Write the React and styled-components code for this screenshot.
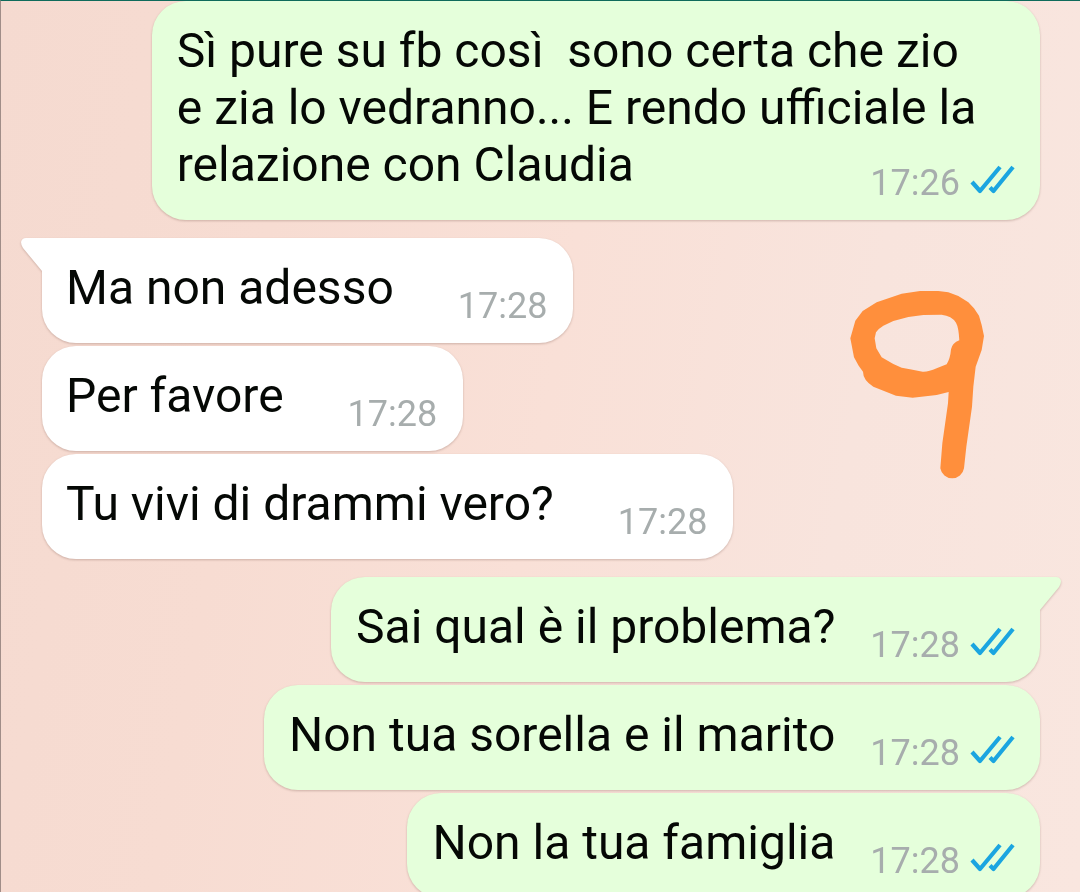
import styled, { createGlobalStyle, css } from 'styled-components'

const colors = {
    outgoing: '#e5ffdb',
    incoming: '#ffffff',
    text: '#050805',
    time: '#a7adad',
    tick: '#1ba5e0',
    marker: '#ff8f3c',
}

const GlobalStyle = createGlobalStyle`
    * {
        box-sizing: border-box;
    }

    body {
        margin: 0;
        font-family: Roboto, sans-serif;
        color: ${colors.text};
    }
`

const StyledChat = styled.main`
    position: relative;
    height: 100vh;
    overflow: hidden;
    border-top: 1px solid #0f6b5b;
    border-left: 1px solid #a08d88;
    background: linear-gradient(100deg, #f5dad0 0%, #f7dcd2 25%, #f9e0d7 50%, #f8e4dd 75%, #f9e6df 100%);
`

const StyledThread = styled.ol`
    display: flex;
    flex-direction: column;
    gap: 18px;
    margin: 0;
    padding: 0 40px 0 41px;
    list-style: none;
`

const StyledGroup = styled.li`
    display: flex;
    flex-direction: column;
    align-items: ${props => (props.$outgoing ? 'flex-end' : 'flex-start')};
    gap: 3px;
`

const StyledBubble = styled.article`
    position: relative;
    display: flex;
    align-items: flex-end;
    gap: ${props => (props.$outgoing ? '35px' : '64px')};
    max-width: 89%;
    padding: ${props => (props.$outgoing ? '0 25px' : '0 26px 0 24px')};
    border-radius: 34px;
    background-color: ${props => (props.$outgoing ? colors.outgoing : colors.incoming)};
    filter: drop-shadow(0 1px 1px rgba(110, 70, 60, 0.3));

    ${props => props.$tail && (props.$outgoing
        ? css`border-top-right-radius: 0;`
        : css`border-top-left-radius: 0;`)}

    /* long messages run on above the time, which floats beside the last line */
    ${props => props.$long && css`
        display: block;
    `}
`

const StyledText = styled.p`
    margin: 0;
    padding: 21px 0 27px;
    padding-right: ${props => (props.$long ? '32px' : '0')};
    font-size: 48px;
    line-height: 57px;
    white-space: pre-wrap;
`

const StyledMeta = styled.div`
    display: flex;
    align-items: center;
    gap: 10px;
    padding-bottom: 16px;
    color: ${colors.time};
    font-size: 36px;
    line-height: 42px;

    ${props => props.$long && css`
        float: right;
        margin-top: -58px;
    `}
`

const StyledTail = styled.svg`
    position: absolute;
    top: 0;
    width: 23px;
    height: 36px;
    fill: ${props => (props.$outgoing ? colors.outgoing : colors.incoming)};

    ${props => (props.$outgoing
        ? css`left: calc(100% - 1px);`
        : css`
            right: calc(100% - 1px);
            transform: scaleX(-1);
        `)}
`

const StyledTicks = styled.svg`
    width: 45px;
    height: 30px;
    margin-bottom: 6px;
    fill: none;
    stroke: ${colors.tick};
    stroke-width: 4.2;
    stroke-linejoin: round;
`

const StyledMarker = styled.svg`
    position: absolute;
    top: 269px;
    right: 70px;
    width: 180px;
    height: 230px;
    fill: ${colors.marker};
`

const groups = [
    {
        outgoing: true,
        messages: [
            {
                text: 'Sì pure su fb così  sono certa che zio e zia lo vedranno... E rendo ufficiale la relazione con Claudia',
                time: '17:26',
                long: true,
            },
        ],
    },
    {
        tail: true,
        messages: [
            { text: 'Ma non adesso', time: '17:28' },
            { text: 'Per favore', time: '17:28' },
            { text: 'Tu vivi di drammi vero?', time: '17:28' },
        ],
    },
    {
        outgoing: true,
        tail: true,
        messages: [
            { text: 'Sai qual è il problema?', time: '17:28' },
            { text: 'Non tua sorella e il marito', time: '17:28' },
            { text: 'Non la tua famiglia', time: '17:28' },
        ],
    },
]

const Ticks = () => (
    <StyledTicks viewBox="0 0 45 30" role="img" aria-label="Letto">
        <path d="M2 17 10 26 30 2" />
        <path d="M20 22.5 23.5 26 43 2" />
    </StyledTicks>
)

const Message = ({ text, time, long, outgoing, tail }) => (
    <StyledBubble $outgoing={outgoing} $tail={tail} $long={long}>
        {tail && (
            <StyledTail $outgoing={outgoing} viewBox="0 0 23 36" aria-hidden="true">
                <path d="M0 0H17Q21 0 22 4Q22 7 20 10L1 33V36H0Z" />
            </StyledTail>
        )}
        <StyledText $long={long}>{text}</StyledText>
        <StyledMeta $long={long}>
            <time>{time}</time>
            {outgoing && <Ticks />}
        </StyledMeta>
    </StyledBubble>
)

const Marker = () => (
    <StyledMarker viewBox="0 0 540 690" role="img" aria-label="9">
        <path
            fillRule="evenodd"
            d="M270 63 325 63 355 67 385 78 415 97 432 115 447 137 455 165 462 198 455 240 437 290 430 350 426 410
               409 530 402 595A36 36 0 0 1 331 595L337 520 354 400 356 366 320 375 248 383 198 377 130 350
               Q99 330 99 305L86 287 72 262 61 205 76 152 98 123 140 97 215 71Z
               M280 135 335 134Q365 137 378 158Q386 172 388 211Q367 219 363 238Q361 265 350 283L320 295
               Q295 306 278 305L240 298 215 293 190 282 155 262 139 235 134 205 138 187Q146 175 160 167L190 153 235 141Z"
        />
    </StyledMarker>
)

const App = () => (
    <>
        <GlobalStyle />
        <StyledChat>
            <StyledThread>
                {groups.map(({ outgoing, tail, messages }, groupIndex) => (
                    <StyledGroup key={groupIndex} $outgoing={outgoing}>
                        {messages.map((message, index) => (
                            <Message
                                key={message.text}
                                {...message}
                                outgoing={outgoing}
                                tail={tail && index === 0}
                            />
                        ))}
                    </StyledGroup>
                ))}
            </StyledThread>
            <Marker />
        </StyledChat>
    </>
)

export default App
